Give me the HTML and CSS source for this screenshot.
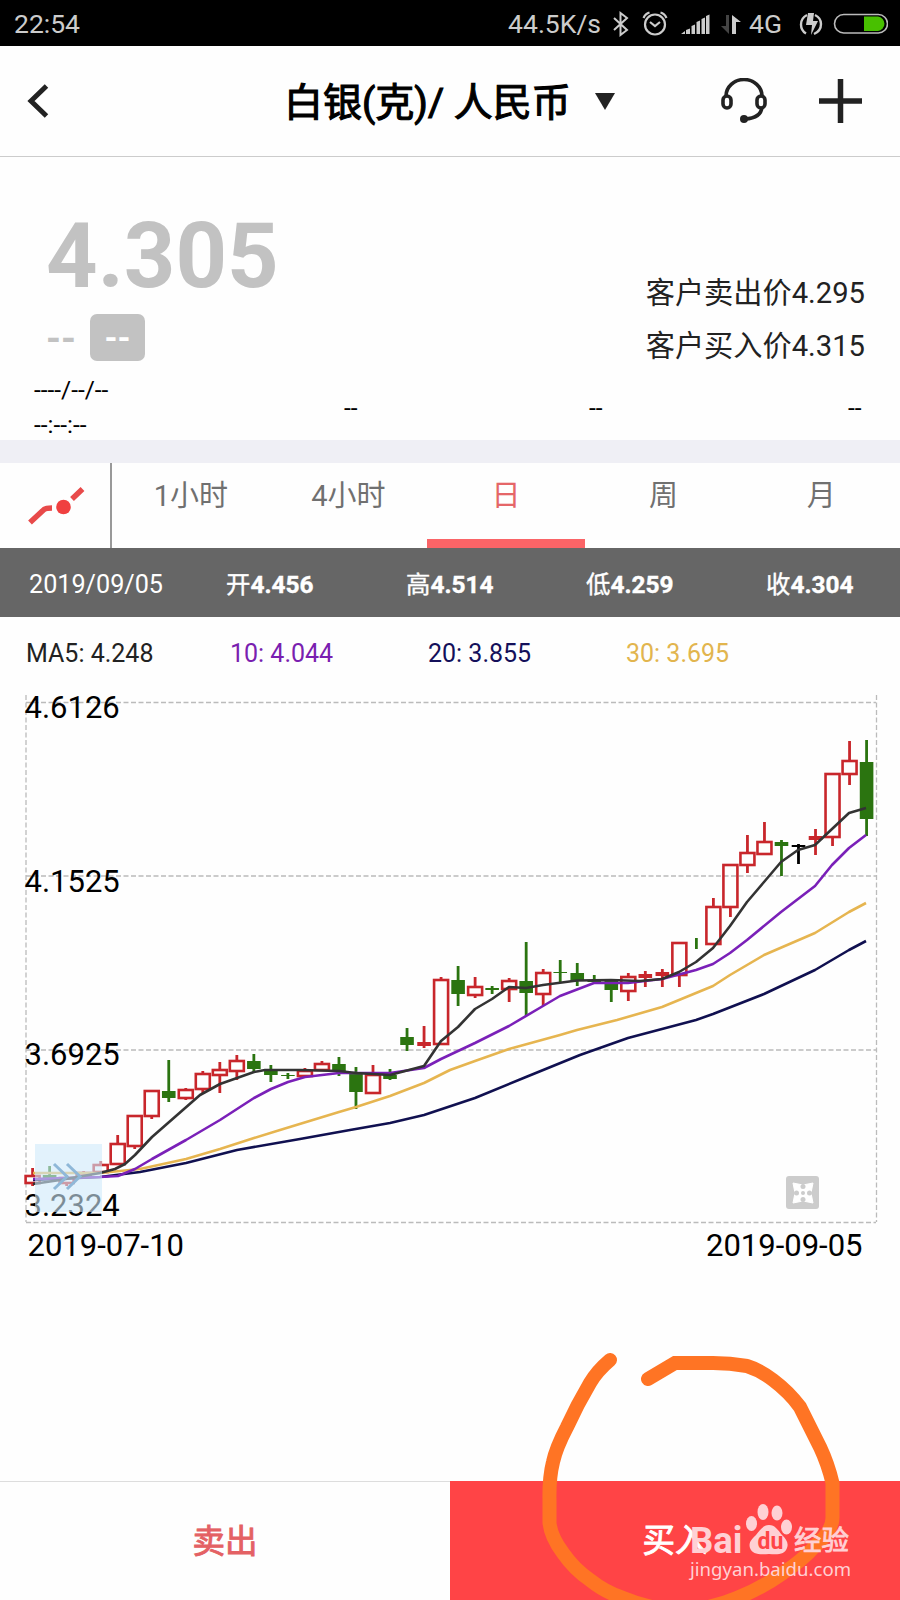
FILE: index.html
```
<!DOCTYPE html>
<html lang="zh-CN">
<head>
  <title>白银(克)/ 人民币</title>
  <meta charset="utf-8">
  <link rel="stylesheet" href="styles.css">
</head>
<body>
  <div class="status-bar">
    <span>22:54</span>
    <span class="speed">44.5K/s</span>
    <svg class="status-icons" width="144" height="45" viewBox="612 0 144 45">
      <path d="M616 17l13 12-6.500 5v-22l6.500 5-13 12" fill="none" stroke="#ccc" stroke-width="2"/>
      <g fill="none" stroke="#ccc" stroke-width="2.200">
        <circle cx="657" cy="23.500" r="10"/>
        <path d="M652 21l5 4 5-4M645.500 17q2-4.500 6-5.500M668.500 17q-2-4.500-6-5.500"/>
      </g>
      <path d="M683 33l4-3v3zM688 29l4-1.500v5.500h-4zM693.500 25l3.500-1.500v9.500h-3.500zM698.500 21l3.500-1.500v13.500h-3.500zM703.500 18l3.500-1.500v16.500h-3.500zM708 15l3.500-1.500v19.500h-3.500z" fill="#ccc"/>
      <path d="M731 14v19l-8-8h5v-11z" fill="#444"/>
      <path d="M734 33v-19l9 7h-5v12z" fill="#ccc"/>
    </svg>
    <span class="network">4G</span>
    <svg class="battery" width="92" height="45" viewBox="796 0 92 45">
      <g fill="none" stroke="#ccc" stroke-width="2.400">
        <path d="M807 14q-6 3-6 9.500 0 6 5 9M815 14q6 3 6 9 0 7-7 10"/>
      </g>
      <path d="M808 12h6l-1 8h5l-7 14 1-10h-6z" fill="#ccc"/>
      <rect x="834.500" y="13.500" width="53" height="18.500" rx="9.200" fill="none" stroke="#bbb" stroke-width="1.600"/>
      <path d="M864 15.500h14a7.300 7.300 0 0 1 0 14.500h-14z" fill="#48c000"/>
    </svg>
  </div>

  <div class="header">
    <svg class="back" width="24" height="36" viewBox="0 0 24 36">
      <path d="M19.500 3L4 18l15.500 15" fill="none" stroke="#222" stroke-width="5"/>
    </svg>
    <h1>白银(克)/ 人民币</h1>
    <svg class="caret" width="20" height="17" viewBox="0 0 20 17"><path d="M0 0h20L10 17z" fill="#222"/></svg>
    <svg class="headset" width="48" height="46" viewBox="0 0 48 46" fill="none" stroke="#222" stroke-width="3.600">
      <path d="M6 18a18 16.500 0 0 1 36 0M42 29q-1 11-17 12"/>
      <rect x="3" y="18" width="8" height="12" rx="4"/>
      <rect x="37" y="18" width="8" height="12" rx="4"/>
      <circle cx="24" cy="41" r="4" fill="#222" stroke="none"/>
    </svg>
    <svg class="plus" width="44" height="44" viewBox="0 0 44 44"><path d="M0 22h43M21.500 0v44" stroke="#222" stroke-width="5.500"/></svg>
  </div>

  <div class="quote">
    <div class="quote-main">
      <div>
        <div class="price">4.305</div>
        <div class="change"><span class="diff">--</span><span class="badge">--</span></div>
      </div>
      <div class="client-prices">
        <div>客户卖出价4.295</div>
        <div>客户买入价4.315</div>
      </div>
    </div>
    <div class="quote-extra">
      <div class="datetime">----/--/--<br>--:--:--</div>
      <span>--</span>
      <span>--</span>
      <span>--</span>
    </div>
  </div>

  <div class="tabs">
    <div class="tab-icon">
      <svg width="60" height="42" viewBox="26 484 60 42">
        <path d="M30 522.500l14-13q2-1.500 8-1.500M72 499l10.500-10" fill="none" stroke="#e84a4a" stroke-width="5.500"/>
        <circle cx="63.500" cy="507" r="7.300" fill="#f04040"/>
      </svg>
    </div>
    <div class="tab">1小时</div>
    <div class="tab">4小时</div>
    <div class="tab active">日</div>
    <div class="tab">周</div>
    <div class="tab">月</div>
  </div>

  <div class="ohlc">
    <span class="date">2019/09/05</span>
    <span>开<b>4.456</b></span>
    <span>高<b>4.514</b></span>
    <span>低<b>4.259</b></span>
    <span>收<b>4.304</b></span>
  </div>

  <div class="averages">
    <span class="ma5">MA5: 4.248</span>
    <span class="ma10">10: 4.044</span>
    <span class="ma20">20: 3.855</span>
    <span class="ma30">30: 3.695</span>
  </div>

  <svg class="chart" width="900" height="590" viewBox="0 690 900 590">
    <path class="grid" d="M26 702.500H876M26 876H876M26 1050H876M26 1222.500H876M26 695V1222M876.500 695V1222"/>
    <g id="candles"></g>
    <g class="lines">
      <polyline stroke="#101050" points="33,1180 100,1177 140,1172 186,1163 237,1150 300,1139 350,1130 390,1123 424,1115 475,1098 526,1077 580,1055 628,1038 696,1020 713,1014 764,994 815,970 849,950 866,941"/>
      <polyline stroke="#e6b550" points="33,1173 100,1173 140,1169 186,1159 220,1149 254,1138 280,1130 339,1112 356,1107 390,1096 424,1083 450,1070 475,1061 509,1049 560,1035 577,1030 617,1020 662,1007 713,986 730,975 764,955 815,933 849,912 866,903"/>
      <polyline stroke="#7a20b8" points="33,1179 100,1177 118,1176 135,1169 152,1159 186,1140 220,1120 254,1098 271,1089 288,1082 305,1077 322,1075 339,1073 390,1073 424,1068 441,1059 475,1043 509,1026 543,1006 560,996 594,983 628,983 662,979 696,970 713,964 730,953 747,940 781,912 815,886 832,865 849,848 866,835"/>
      <polyline stroke="#333" points="33,1184 60,1180 100,1173 115,1169 125,1164 135,1155 152,1137 200,1095 220,1084 254,1072 265,1070 300,1070 339,1071 356,1073 390,1075 424,1066 441,1041 458,1027 475,1009 492,999 509,987 526,988 543,985 577,980.500 611,980 640,981 662,979 679,972 696,962 713,948 730,926 747,902 764,882 781,862 798,850 815,845 832,829 849,813 866,808"/>
    </g>
    <g class="labels">
      <text x="24.500" y="718">4.6126</text>
      <text x="24.500" y="891.500">4.1525</text>
      <text x="24.500" y="1065">3.6925</text>
      <text x="24.500" y="1216">3.2324</text>
      <text x="27.500" y="1256">2019-07-10</text>
      <text x="706" y="1256">2019-09-05</text>
    </g>
    <rect x="35" y="1144" width="67" height="68" fill="#cfeafa" opacity=".6"/>
    <path d="M54 1164l13 12.500-13 12.500M67 1164l13 12.500-13 12.500" fill="none" stroke="#8fb8d8" stroke-width="3"/>
    <g>
      <rect x="786" y="1176" width="33" height="33" rx="3" fill="#ccc"/>
      <path d="M793 1183l10 2 10-2-2 10 2 10-10-2-10 2 2-10z" fill="#fff" stroke="#fff"/>
      <g fill="#ccc">
        <circle cx="803" cy="1186.500" r="2.500"/>
        <circle cx="803" cy="1199.500" r="2.500"/>
        <circle cx="796.500" cy="1193" r="2.500"/>
        <circle cx="809.500" cy="1193" r="2.500"/>
        <circle cx="803" cy="1193" r="2"/>
      </g>
    </g>
  </svg>

  <div class="actions">
    <div class="sell">卖出</div>
    <div class="buy">买入</div>
  </div>

  <svg class="marker" width="320" height="260" viewBox="530 1340 320 260">
    <path d="M610 1360Q597 1371 590 1383Q577 1405 567 1427Q556 1448 553 1462Q549 1478 549.500 1500V1523Q551 1537 563 1553Q574 1569 590 1580Q605 1592 623 1598Q680 1622 737 1598Q762 1588 783 1573Q803 1560 815 1546Q832 1532 832.500 1518V1483Q828 1464 820 1447Q810 1427 800 1407Q789 1392 773 1380Q760 1370 747 1366Q730 1363 713 1363H675L648 1379"/>
  </svg>

  <div class="watermark">
    <div class="logo">
      <span class="bai">Bai</span>
      <svg width="47" height="52" viewBox="745 1503 47 52">
        <g fill="#ffd0d4">
          <ellipse cx="751.500" cy="1523.500" rx="5.500" ry="7.500"/>
          <ellipse cx="763" cy="1512" rx="5.500" ry="8"/>
          <ellipse cx="777" cy="1513" rx="5.500" ry="7.500"/>
          <ellipse cx="786.500" cy="1527" rx="5.500" ry="7.500"/>
          <path d="M769 1525c6 0 9 5 13 10 4 4 7 8 5 13-2 6-8 7-18 6-10 1-17 0-19-6-2-6 3-10 6-13 4-5 7-10 13-10z"/>
        </g>
        <text x="757.500" y="1549">du</text>
      </svg>
      <span class="jingyan">经验</span>
    </div>
    <div class="url">jingyan.baidu.com</div>
  </div>

  <script src="chart.js"></script>
</body>
</html>
```
FILE: styles.css
```
body {
  font-family: Roboto, 'Noto Sans CJK SC', sans-serif;
  margin: 0;
  width: 900px;
  height: 1600px;
  display: flex;
  flex-direction: column;
  position: relative;
  overflow: hidden;
  background: #fefefe;
  color: #222;
}

svg {
  display: block;
  flex: none;
}

.status-bar {
  display: flex;
  align-items: center;
  height: 46px;
  padding: 0 12px 0 14px;
  background: #000;
  color: #ccc;
  font-size: 26.5px;
  line-height: 47px;
}

.speed {
  margin-left: auto;
}

.status-icons {
  margin-left: 9px;
  margin-right: -5px;
}

.network {
  width: 35px;
  margin-right: 12px;
}

.header {
  display: flex;
  align-items: center;
  height: 111px;
  border-bottom: 1px solid #ccc;
  box-sizing: border-box;
}

.back {
  margin-left: 27px;
}

h1 {
  margin: 3px 0 0 233px;
  width: 287px;
  font-size: 39px;
  font-weight: 400;
  line-height: 50px;
  color: #000;
  white-space: nowrap;
  -webkit-text-stroke: 1.1px #000;
}

.caret {
  margin-left: 24px;
}

.headset {
  margin-left: 105px;
}

.plus {
  margin-left: 51px;
}

.quote {
  height: 283px;
}

.quote-main {
  display: flex;
  justify-content: space-between;
  height: 216px;
  padding: 0 35px 0 46px;
}

.price {
  margin-top: 47px;
  height: 110px;
  font-size: 90px;
  line-height: 105px;
  font-weight: bold;
  color: #c2c2c2;
}

.change {
  display: flex;
  align-items: center;
  height: 47px;
  gap: 14px;
  font-size: 38px;
  font-weight: bold;
  color: #c2c2c2;
}

.diff {
  line-height: 47px;
  padding-top: 4px;
}

.badge {
  width: 55px;
  height: 47px;
  border-radius: 7px;
  background: #c2c2c2;
  color: #fff;
  font-size: 33px;
  line-height: 47px;
  text-align: center;
}

.client-prices {
  margin-top: 110px;
  font-size: 29.2px;
  line-height: 53px;
}

.quote-extra {
  display: grid;
  grid-template-columns: 310px 245px 259px auto;
  align-items: center;
  padding-left: 34px;
  height: 63px;
  font-size: 24.5px;
  color: #000;
}

.datetime {
  line-height: 34.5px;
}

.tabs {
  display: flex;
  height: 85px;
  border-top: 23px solid #efeff5;
}

.tab-icon {
  width: 112px;
  box-sizing: border-box;
  padding: 21px 0 0 26px;
  border-right: 2px solid #999;
}

.tab {
  flex: 1;
  box-sizing: border-box;
  padding-top: 13px;
  font-size: 29px;
  line-height: 40px;
  text-align: center;
  color: #707070;
}

.tab.active {
  color: #e56668;
  border-bottom: 9px solid #fa6467;
}

.ohlc {
  display: grid;
  grid-template-columns: 197px 180px 180px 180px auto;
  height: 69px;
  padding-left: 29px;
  background: #666;
  color: #fff;
  font-size: 24.4px;
  line-height: 73px;
  -webkit-text-stroke: 0.4px #fff;
}

.ohlc .date {
  font-size: 25.2px;
  -webkit-text-stroke: 0;
}

.averages {
  display: grid;
  grid-template-columns: 204px 198px 198px auto;
  height: 73px;
  padding-left: 26px;
  font-size: 25px;
  line-height: 73px;
}

.ma10 { color: #7a1fb0; }
.ma20 { color: #14105a; }
.ma30 { color: #e2b54e; }

.grid {
  fill: none;
  stroke: #bbb;
  stroke-width: 1.3;
  stroke-dasharray: 5 2.5;
}

.lines {
  fill: none;
  stroke-width: 2.6;
  stroke-linejoin: round;
}

.labels {
  font-size: 31px;
  fill: #000;
}

.actions {
  display: flex;
  margin-top: auto;
  height: 119px;
  font-size: 32.5px;
  line-height: 121px;
  text-align: center;
}

.sell, .buy {
  flex: 1;
  box-sizing: border-box;
}

.sell {
  border-top: 1px solid #ddd;
  color: #e46164;
  -webkit-text-stroke: 0.9px #e46164;
}

.buy {
  background: #ff4446;
  color: #fff;
  -webkit-text-stroke: 0.9px #fff;
}

.marker {
  position: absolute;
  left: 530px;
  top: 1340px;
  fill: none;
  stroke: #ff7424;
  stroke-width: 14px;
  stroke-linecap: round;
}

.watermark {
  position: absolute;
  left: 690px;
  top: 1503px;
  color: #ffd0d4;
}

.logo {
  display: flex;
  height: 52px;
}

.bai {
  width: 55px;
  font: bold 36.5px/76px Roboto, sans-serif;
}

.logo text {
  font: bold 23px Roboto, sans-serif;
  fill: #ff4446;
}

.jingyan {
  margin-left: 2px;
  font-size: 27.5px;
  line-height: 76px;
  -webkit-text-stroke: 0.8px #ffd0d4;
}

.url {
  margin-top: -4px;
  font: 18.6px/36px 'Noto Sans', sans-serif;
}
```
FILE: chart.js
```
// [type, body top, body bottom, high, low], r = up, g = down, k = flat
const candles = [
  ['r', 1175, 1184, 1168, 1186],
  ['g', 1175, 1178, 1166, 1178],
  ['r', 1177, 1184, 1175, 1186],
  ['r', 1172, 1177, 1171, 1177],
  ['r', 1164, 1173, 1161, 1173],
  ['r', 1143, 1165, 1135, 1165],
  ['r', 1115, 1147, 1115, 1149],
  ['r', 1090, 1117, 1090, 1119],
  ['g', 1091, 1098, 1060, 1102],
  ['r', 1089, 1099, 1088, 1100],
  ['r', 1073, 1090, 1071, 1093],
  ['r', 1069, 1076, 1062, 1093],
  ['r', 1060, 1072, 1055, 1080],
  ['g', 1061, 1069, 1054, 1073],
  ['g', 1069, 1075, 1065, 1082],
  ['g', 1075, 1076, 1073, 1079],
  ['r', 1070, 1077, 1068, 1077],
  ['r', 1063, 1071, 1061, 1071],
  ['g', 1064, 1071, 1057, 1076],
  ['g', 1074, 1092, 1067, 1109],
  ['r', 1074, 1094, 1065, 1094],
  ['g', 1075, 1079, 1069, 1080],
  ['g', 1037, 1045, 1028, 1051],
  ['r', 1042, 1046, 1026, 1048],
  ['r', 979, 1045, 977, 1045],
  ['g', 980, 994, 966, 1006],
  ['r', 986, 996, 977, 998],
  ['g', 988, 990, 986, 994],
  ['r', 980, 990, 978, 1002],
  ['g', 981, 993, 942, 1016],
  ['r', 972, 995, 969, 1006],
  ['g', 972, 973, 960, 983],
  ['g', 973, 981, 963, 986],
  ['g', 981, 982, 975, 982],
  ['g', 981, 990, 980, 1002],
  ['r', 976, 992, 973, 1001],
  ['r', 974, 978, 971, 987],
  ['r', 972, 976, 969, 987],
  ['r', 942, 976, 942, 987],
  ['g', 938, 938, 938, 949],
  ['r', 906, 945, 898, 945],
  ['r', 864, 908, 864, 917],
  ['r', 852, 866, 835, 873],
  ['r', 841, 855, 822, 855],
  ['g', 842, 846, 840, 876],
  ['k', 845, 847, 844, 864],
  ['r', 836, 840, 829, 855],
  ['r', 773, 838, 773, 846],
  ['r', 760, 775, 741, 785],
  ['g', 762, 819, 740, 836]
];

const colors = { r: '#c8262b', g: '#2b7410', k: '#000' };

document.getElementById('candles').innerHTML = candles.map(([type, top, bottom, high, low], i) => {
  const x = 32.6 + i * 17.02;
  const color = colors[type];
  const wick = `<path d="M${x} ${high}V${top}M${x} ${bottom}V${low}" stroke="${color}" stroke-width="2.8"/>`;
  if (type === 'r' && bottom - top > 4) {
    return wick + `<rect x="${x - 7}" y="${top + 1}" width="14" height="${bottom - top - 2}" fill="none" stroke="${color}" stroke-width="2.6"/>`;
  }
  return wick + `<rect x="${x - 6.8}" y="${top}" width="13.6" height="${bottom - top}" fill="${color}"/>`;
}).join('');
```
